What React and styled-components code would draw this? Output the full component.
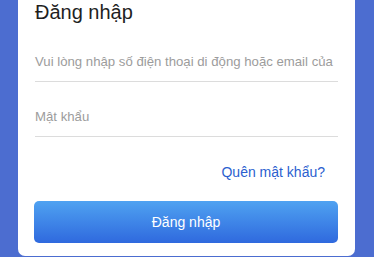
import React from 'react'
import styled, { createGlobalStyle } from 'styled-components'

const GlobalStyle = createGlobalStyle`
  html, body {
    margin: 0;
    padding: 0;
    background: #4c6dd0;
    font-family: "Liberation Sans", Arial, sans-serif;
  }
`

const Page = styled.div`
  height: 257px;
  padding: 0 19px 0 18px;
  box-sizing: border-box;
  overflow: hidden;
`

const Card = styled.div`
  background: #fff;
  height: 256px;
  border-radius: 0 0 7px 7px;
  padding: 0 17px;
  box-sizing: border-box;
  display: flex;
  flex-direction: column;
`

const Title = styled.h1`
  margin: 0;
  font-size: 20px;
  font-weight: 400;
  color: #1f1f1f;
  line-height: 24px;
`

const Field = styled.div`
  border-bottom: 1px solid #dcdcdc;
  height: ${p => p.h}px;
  display: flex;
  align-items: flex-end;
  padding-bottom: 12px;
  box-sizing: border-box;
  color: #9c9c9c;
  font-size: 13.2px;
  white-space: nowrap;
`

const ForgotRow = styled.div`
  display: flex;
  justify-content: flex-end;
  padding: 27px 13px 0 0;
  height: 64px;
  box-sizing: border-box;
`

const Forgot = styled.a`
  color: #2b5fcf;
  font-size: 14px;
  text-decoration: none;
`

const Button = styled.button`
  height: 42px;
  margin-left: -1px;
  border: none;
  border-radius: 5px;
  background: linear-gradient(180deg, #4fa2f1 0%, #2f69de 100%);
  color: #fff;
  font-family: inherit;
  font-size: 14px;
  cursor: pointer;
`

export default function App() {
  return (
    <>
      <GlobalStyle />
      <Page>
        <Card>
          <Title>Đăng nhập</Title>
          <Field h={58}>Vui lòng nhập số điện thoại di động hoặc email của</Field>
          <Field h={55}>Mật khẩu</Field>
          <ForgotRow>
            <Forgot href="#">Quên mật khẩu?</Forgot>
          </ForgotRow>
          <Button>Đăng nhập</Button>
        </Card>
      </Page>
    </>
  )
}
